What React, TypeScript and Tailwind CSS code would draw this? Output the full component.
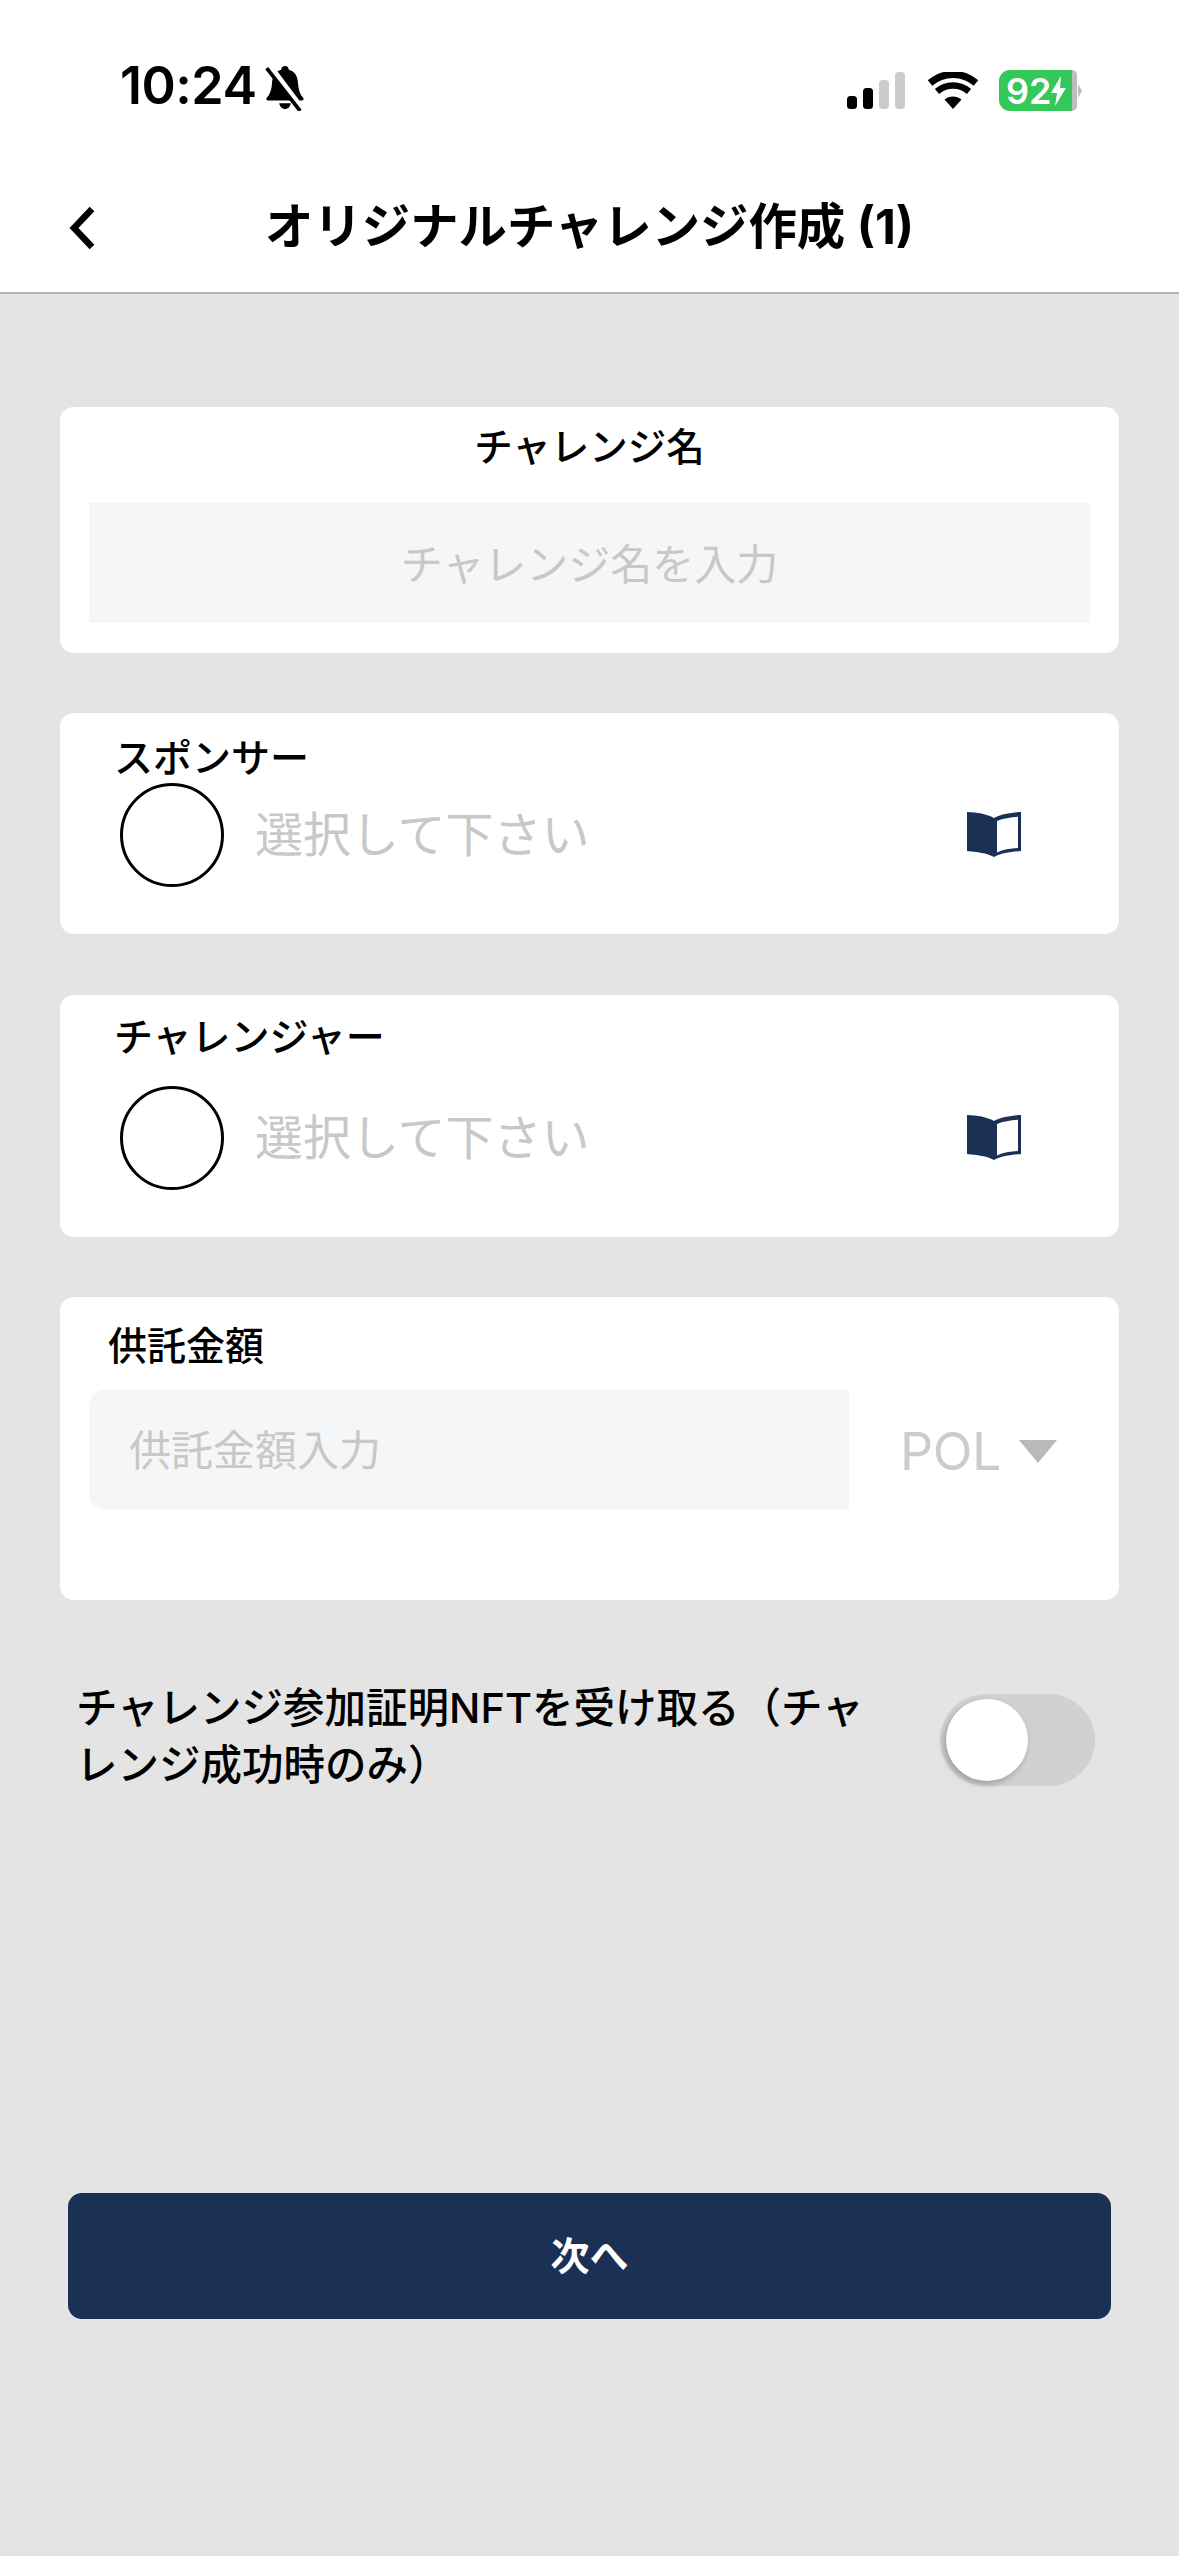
const cjk = "font-['Inter','Noto_Sans_CJK_JP',sans-serif]";

function BellOff() {
  return (
    <svg width="44" height="46" viewBox="0 0 42 44" className="ml-[6px]">
      <path d="M21 1c2.2 0 3.6 1.6 3.6 3.6 6 1.6 8.4 6.5 8.8 12.4.4 6.4 1.8 11 5 14.4.9 1 .3 2.6-1.2 2.6H4.8c-1.5 0-2.1-1.6-1.2-2.6 3.2-3.4 4.6-8 5-14.4.4-5.9 2.8-10.8 8.8-12.4C17.4 2.6 18.8 1 21 1z" fill="#000" />
      <path d="M15.5 36.5h11c-.4 3.2-2.6 5.5-5.5 5.5s-5.100-2.300-5.500-5.500z" fill="#000" />
      <path d="M7 2l30 40" stroke="#fff" strokeWidth="6" />
      <path d="M3.500 3l32 41" stroke="#000" strokeWidth="3.500" />
    </svg>
  );
}

function StatusBar() {
  return (
    <div className="flex h-[150px] items-end pl-[120px] pr-[97px] pb-[39px]">
      <span className="text-[52px] leading-[50px] font-semibold tracking-[-0.5px] text-black font-['Inter',sans-serif]">10:24</span>
      <BellOff />
      <div className="ml-auto flex items-center gap-[20px]">
        <svg width="60" height="38" viewBox="0 0 60 38">
          <rect x="0" y="24" width="10" height="13" rx="3.500" fill="#000" />
          <rect x="16" y="16" width="10" height="21" rx="3.500" fill="#000" />
          <rect x="32" y="8" width="10" height="29" rx="3.500" fill="#cccccc" />
          <rect x="48" y="0" width="10" height="37" rx="3.500" fill="#cccccc" />
        </svg>
        <svg width="52" height="38" viewBox="0 0 52 38">
          <path d="M26 37l-8.500-9.500c4.800-4 12.200-4 17 0z" fill="#000" />
          <path d="M10 19.500C19 11.500 33 11.500 42 19.500" stroke="#000" strokeWidth="6.500" fill="none" />
          <path d="M3 11C16.500-.5 35.500-.5 49 11" stroke="#000" strokeWidth="7" fill="none" />
        </svg>
        <div className="flex items-center">
          <div className="flex h-[41px] w-[73px] items-center overflow-hidden rounded-l-[11px] bg-[#34c759] pl-[7px]">
            <span className="text-[36px] leading-none font-semibold text-white font-['Inter',sans-serif]">92</span>
            <svg width="17" height="30" viewBox="0 0 17 30" className="ml-[-1px] shrink-0">
              <path d="M11 0L1 17h6l-2 13L16 12h-6z" fill="#fff" />
            </svg>
          </div>
          <div className="h-[41px] w-[5px] rounded-r-[5px] bg-[#bdbdbd]" />
          <div className="ml-[1px] h-0 w-0 border-y-[7px] border-l-[4px] border-y-transparent border-l-[#bdbdbd]" />
        </div>
      </div>
    </div>
  );
}

function Header() {
  return (
    <header className="relative flex h-[144px] items-center justify-center border-b-2 border-[#b4b4b4] bg-white pt-[12px]">
      <svg width="30" height="46" viewBox="0 0 30 46" className="absolute top-[55px] left-[68px]">
        <path d="M24 4L6 23l18 19" stroke="#000" strokeWidth="6.500" fill="none" />
      </svg>
      <h1 className="text-[48.400px] leading-none font-bold text-black">オリジナルチャレンジ作成 (1)</h1>
    </header>
  );
}

function BookIcon() {
  return (
    <svg width="54" height="46" viewBox="0 0 54 46" className="shrink-0">
      <path d="M0 0c10 .3 20 2 27 6V45C20 41 10 40 0 39z" fill="#1a3055" />
      <path d="M27 6C34 2 44 .3 54 0v39c-10 1-20 2-27 6z" fill="#1a3055" />
      <path d="M30 9c6-2.500 13-3.500 21-4.200V36c-8 .5-15 1.500-21 4.500z" fill="#fff" />
    </svg>
  );
}

function PickerCard({ label, labelClass, className }: { label: string; labelClass: string; className: string }) {
  return (
    <section className={`rounded-[14px] bg-white ${className}`}>
      <div className={`text-[39px] leading-[46px] font-medium text-black ${labelClass}`}>{label}</div>
      <div className="flex items-center pr-[98px] pl-[60px]">
        <div className="size-[104px] shrink-0 rounded-full border-[3px] border-black" />
        <span className="ml-[31px] text-[48px] leading-none text-[#c8c8c8]">選択して下さい</span>
        <div className="ml-auto">
          <BookIcon />
        </div>
      </div>
    </section>
  );
}

export default function App() {
  return (
    <div className={`flex h-[2556px] w-[1179px] flex-col overflow-hidden bg-[#e4e4e4] ${cjk}`}>
      <div className="bg-white">
        <StatusBar />
      </div>
      <Header />

      <main className="flex flex-col px-[60px] pt-[113px]">
        <section className="h-[246px] rounded-[14px] bg-white px-[29px] pt-[17px]">
          <div className="text-center text-[38.500px] leading-[46px] font-medium text-black">チャレンジ名</div>
          <div className="mt-[33px] flex h-[120px] items-center justify-center bg-[#f4f6f7] pt-[2px] text-[42px] text-[#c8c8c8]">
            チャレンジ名を入力
          </div>
        </section>

        <PickerCard label="スポンサー" labelClass="pl-[54px] pt-[22px] pb-[2px]" className="mt-[60px] h-[221px]" />
        <PickerCard label="チャレンジャー" labelClass="pl-[54px] pt-[19px] pb-[26px]" className="mt-[61px] h-[242px]" />

        <section className="mt-[60px] h-[303px] rounded-[14px] bg-white px-[29px] pt-[26px]">
          <div className="pl-[19px] text-[39px] leading-[46px] font-medium text-black">供託金額</div>
          <div className="mt-[21px] flex h-[120px] items-center">
            <div className="flex h-full w-[760px] items-center rounded-l-[16px] bg-[#f4f6f7] pl-[40px] text-[42px] text-[#c8c8c8]">
              供託金額入力
            </div>
            <span className="ml-[51px] pt-[3px] text-[52px] leading-none tracking-[-0.500px] text-[#cccccc]">POL</span>
            <div className="mt-[2px] ml-[18px] h-0 w-0 border-x-[19px] border-t-[23px] border-x-transparent border-t-[#b9b9b9]" />
          </div>
        </section>

        <div className="mt-[80px] flex items-start pr-[24px] pl-[16px]">
          <p className="w-[810px] text-[41.500px] leading-[57px] font-medium text-black">
            チャレンジ参加証明NFTを受け取る（チャレンジ成功時のみ）
          </p>
          <div className="mt-[14px] ml-auto flex h-[92px] w-[155px] items-center rounded-full bg-[#d1d1d3] pl-[6px]">
            <div className="size-[82px] rounded-full bg-white shadow-[-2px_3px_6px_rgba(0,0,0,0.25)]" />
          </div>
        </div>

        <button className="mx-[8px] mt-[399px] flex h-[126px] items-center justify-center rounded-[14px] bg-[#1a3055] text-[39px] font-bold text-white">
          次へ
        </button>
      </main>
    </div>
  );
}
